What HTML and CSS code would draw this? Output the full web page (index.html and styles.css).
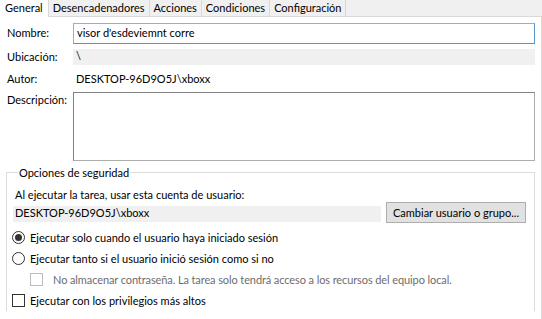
FILE: index.html
```html
<!DOCTYPE html>
<html lang="es">
  <head>
    <meta charset="UTF-8" />
    <title>Propiedades de la tarea</title>
    <link rel="stylesheet" href="styles.css">
  </head>
  <body>
    <div class="tabs">
      <span class="tab active">General</span>
      <span class="tab">Desencadenadores</span>
      <span class="tab">Acciones</span>
      <span class="tab">Condiciones</span>
      <span class="tab">Configuración</span>
    </div>
    <div class="panel">
      <div class="row row-name">
        <span class="label">Nombre:</span>
        <div class="field input focused">visor d'esdeviemnt corre</div>
      </div>
      <div class="row row-location">
        <span class="label">Ubicación:</span>
        <div class="field readonly">\</div>
      </div>
      <div class="row row-author">
        <span class="label">Autor:</span>
        <div class="field plain">DESKTOP-96D9O5J\xboxx</div>
      </div>
      <div class="row row-desc">
        <span class="label">Descripción:</span>
        <div class="field textarea"></div>
      </div>

      <fieldset class="security">
        <legend>Opciones de seguridad</legend>
        <div class="account-label">Al ejecutar la tarea, usar esta cuenta de usuario:</div>
        <div class="account-row">
          <div class="account">DESKTOP-96D9O5J\xboxx</div>
          <button class="change">Cambiar usuario o grupo...</button>
        </div>
        <label class="opt first"><span class="radio checked"></span>Ejecutar solo cuando el usuario haya iniciado sesión</label>
        <label class="opt"><span class="radio"></span>Ejecutar tanto si el usuario inició sesión como si no</label>
        <label class="opt sub disabled"><span class="check"></span>No almacenar contraseña. La tarea solo tendrá acceso a los recursos del equipo local.</label>
        <label class="opt"><span class="check"></span>Ejecutar con los privilegios más altos</label>
      </fieldset>
    </div>
  </body>
</html>
```

FILE: styles.css
```css
/* Base */
body {
  margin: 0;
  width: 542px;
  height: 319px;
  overflow: hidden;
  background: #f0f0f0;
  font-family: Lato, "Noto Sans", sans-serif;
  font-size: 11px;
  color: #000000;
  white-space: nowrap;
}

/* Tab strip */
.tabs {
  display: flex;
  height: 16px;
  align-items: flex-end;
}

.tab {
  height: 16px;
  line-height: 15px;
  padding: 0 4px;
  border-right: 1px solid #d9d9d9;
  background: #f0f0f0;
  box-sizing: border-box;
}

.tab.active {
  height: 17px;
  margin-bottom: -1px;
  background: #ffffff;
  padding: 0 5px 0 5px;
  position: relative;
  z-index: 1;
}

/* Panel */
.panel {
  height: 303px;
  box-sizing: border-box;
  background: #ffffff;
  border-top: 1px solid #d9d9d9;
  border-right: 1px solid #d9d9d9;
  padding: 6px 6px 0 6px;
}

.row {
  display: flex;
  align-items: flex-start;
}

.label {
  width: 67px;
  padding-left: 1px;
  flex-shrink: 0;
  box-sizing: border-box;
}

.field {
  flex: 1;
  box-sizing: border-box;
  padding-left: 3px;
}

.row-name .label {
  line-height: 20px;
}

.input {
  height: 21px;
  line-height: 18px;
  border: 1px solid #7eb4ea;
  border-right-color: #5b95d0;
  border-bottom-color: #5b95d0;
}

.row-location {
  margin-top: 5px;
}

.row-location .label {
  line-height: 16px;
}

.readonly {
  height: 16px;
  line-height: 13px;
  background: #f0f0f0;
}

.row-author {
  margin-top: 7px;
  line-height: 14px;
  height: 16px;
}

.row-desc {
  margin-top: 4px;
}

.row-desc .label {
  line-height: 15px;
}

.textarea {
  height: 69px;
  border: 1px solid #adadad;
  border-left-color: #828282;
  border-top-color: #828282;
}

/* Security group */
.security {
  margin: 4px 0 0 0;
  padding: 0 8px 0 6px;
  border: 1px solid #dcdcdc;
  border-bottom: none;
  min-width: 0;
}

.security legend {
  padding: 0 1px;
  margin-left: 5px;
  line-height: 15px;
}

.account-label {
  margin-top: 8px;
  padding-left: 2px;
  line-height: 14px;
}

.account-row {
  display: flex;
  align-items: center;
  justify-content: space-between;
  height: 21px;
}

.account {
  width: 368px;
  height: 16px;
  line-height: 14px;
  padding-left: 2px;
  margin-top: 3px;
  box-sizing: border-box;
  background: #f0f0f0;
}

.change {
  width: 140px;
  height: 21px;
  padding: 0 0 1px 0;
  font: inherit;
  color: #000000;
  background: #e1e1e1;
  border: 1px solid #adadad;
}

.opt {
  display: flex;
  align-items: center;
  height: 21px;
}

.opt.first {
  margin-top: 4px;
}

.opt.sub {
  padding-left: 18px;
}

.opt.disabled {
  color: #6d6d6d;
  letter-spacing: -0.1px;
}

.radio,
.check {
  width: 13px;
  height: 13px;
  box-sizing: border-box;
  border: 1px solid #333333;
  background: #ffffff;
  margin: 0 5px 0 -1px;
  flex-shrink: 0;
}

.radio {
  border-radius: 50%;
  display: flex;
  align-items: center;
  justify-content: center;
}

.radio.checked::after {
  content: "";
  width: 7px;
  height: 7px;
  border-radius: 50%;
  background: #333333;
}

.opt.disabled .check {
  border-color: #bcbcbc;
  margin-right: 10px;
}
```
